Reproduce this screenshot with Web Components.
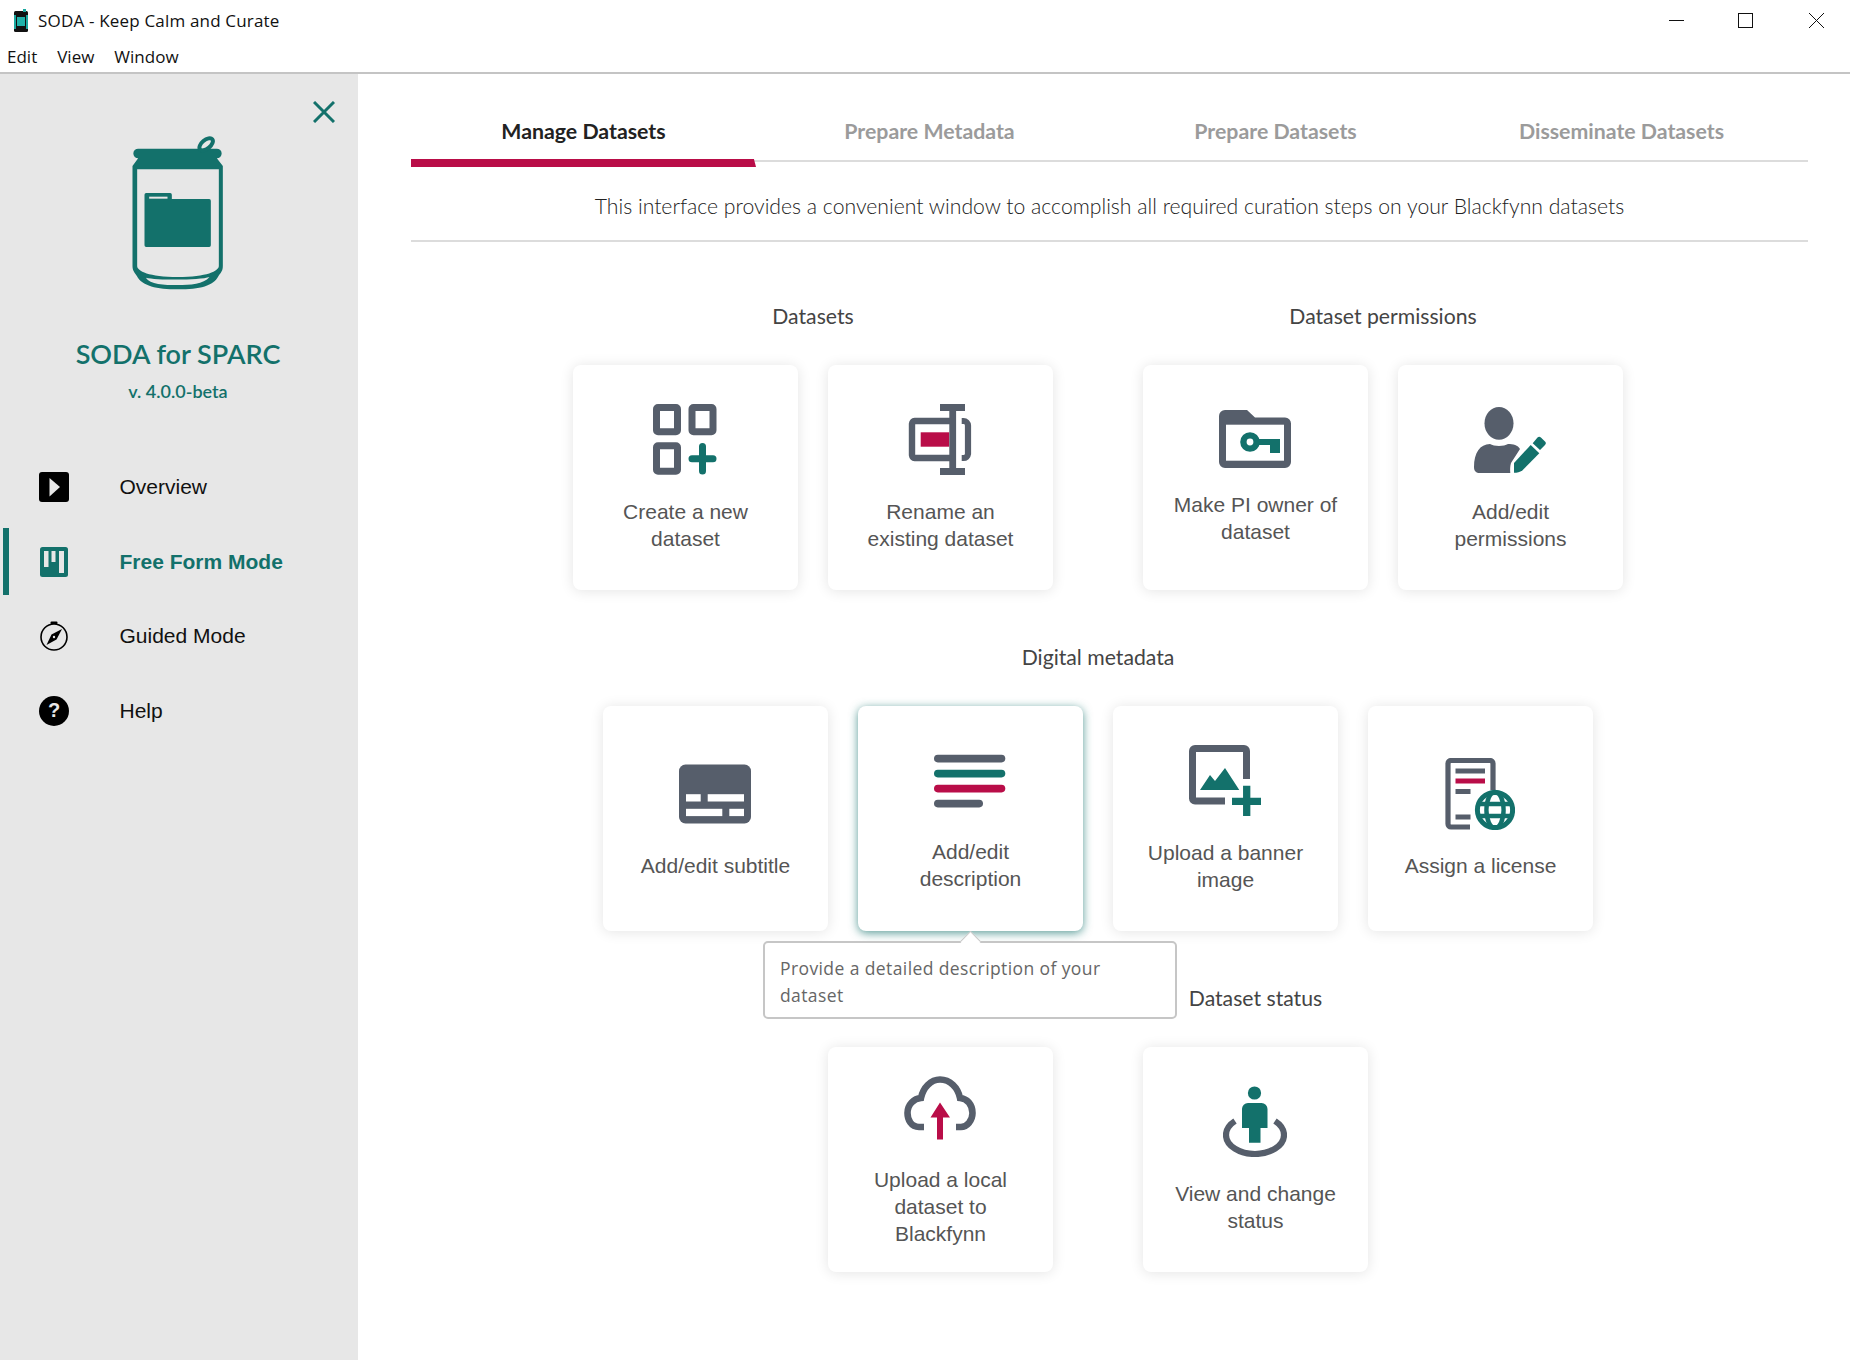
<!DOCTYPE html>
<html lang="en">
<head>
<meta charset="utf-8">
<title>SODA - Keep Calm and Curate</title>
<style>
	html, body { margin: 0; background: #fff; }
	body { font-family: "Liberation Sans", Arial, sans-serif; }
</style>
</head>
<body>
<soda-app>
	<soda-titlebar></soda-titlebar>
	<soda-sidebar>
		<soda-nav-item icon="overview">Overview</soda-nav-item>
		<soda-nav-item icon="freeform" selected>Free Form Mode</soda-nav-item>
		<soda-nav-item icon="guided">Guided Mode</soda-nav-item>
		<soda-nav-item icon="help">Help</soda-nav-item>
	</soda-sidebar>
	<soda-main>
		<soda-tabs>
			<soda-tab selected>Manage Datasets</soda-tab>
			<soda-tab>Prepare Metadata</soda-tab>
			<soda-tab>Prepare Datasets</soda-tab>
			<soda-tab>Disseminate Datasets</soda-tab>
		</soda-tabs>
		<soda-intro>This interface provides a convenient window to accomplish all required curation steps on your Blackfynn datasets</soda-intro>
		<soda-row first>
			<soda-group heading="Datasets">
				<soda-card icon="create">Create a new<br>dataset</soda-card>
				<soda-card icon="rename">Rename an<br>existing dataset</soda-card>
			</soda-group>
			<soda-group heading="Dataset permissions">
				<soda-card icon="owner">Make PI owner of<br>dataset</soda-card>
				<soda-card icon="permissions">Add/edit<br>permissions</soda-card>
			</soda-group>
		</soda-row>
		<soda-row>
			<soda-group heading="Digital metadata">
				<soda-card icon="subtitle">Add/edit subtitle</soda-card>
				<soda-card icon="description" active tip="Provide a detailed description of your dataset">Add/edit<br>description</soda-card>
				<soda-card icon="banner">Upload a banner<br>image</soda-card>
				<soda-card icon="license">Assign a license</soda-card>
			</soda-group>
		</soda-row>
		<soda-row>
			<soda-group>
				<soda-card icon="upload">Upload a local<br>dataset to<br>Blackfynn</soda-card>
			</soda-group>
			<soda-group heading="Dataset status">
				<soda-card icon="status">View and change<br>status</soda-card>
			</soda-group>
		</soda-row>
	</soda-main>
</soda-app>

<script>
const SLATE = '#565e6b';
const TEAL = '#13716b';
const RED = '#b90d48';

const NAV_ICONS = {
	overview: `<svg width="30" height="30" viewBox="0 0 30 30"><rect width="30" height="30" rx="3" fill="#000"/><path d="M10.5 6 L21 15 L10.5 24.5 Z" fill="#e7e7e7"/></svg>`,
	freeform: `<svg width="30" height="30" viewBox="0 0 30 30"><rect x="1" width="28" height="30" rx="2.5" fill="${TEAL}"/><rect x="5" y="4" width="4.5" height="16" fill="#e7e7e7"/><rect x="12.5" y="4" width="4" height="11" fill="#e7e7e7"/><rect x="20" y="4" width="5" height="22" fill="#e7e7e7"/></svg>`,
	guided: `<svg width="30" height="30" viewBox="0 0 30 30"><circle cx="15" cy="16" r="13" fill="none" stroke="#000" stroke-width="1.6"/><rect x="11.5" y="0.5" width="7" height="2.6" rx="1" fill="#000"/><path d="M23 8 L17.5 18.5 L7.5 24 L12.5 13.5 Z" fill="#000"/><circle cx="15" cy="16" r="1.2" fill="#e7e7e7"/></svg>`,
	help: `<span class="help">?</span>`
};

const CARD_ICONS = {
	create: `<svg width="64" height="71" viewBox="0 0 64 71">
		<g fill="#fff" stroke="${SLATE}" stroke-width="7"><rect x="3.5" y="3.5" width="21" height="24.2" rx="1.5"/><rect x="39" y="3.5" width="21" height="24.2" rx="1.5"/><rect x="3.5" y="41.8" width="21" height="25.4" rx="1.5"/></g>
		<path d="M39 54.8 H60 M49.5 42.5 V67" stroke="${TEAL}" stroke-width="7" stroke-linecap="round" fill="none"/></svg>`,
	rename: `<svg width="64" height="71" viewBox="0 0 64 71">
		<path d="M42 17 H7 a3.5 3.5 0 0 0 -3 3 V51 a3.5 3.5 0 0 0 3 3 H42" fill="none" stroke="${SLATE}" stroke-width="6.4"/>
		<rect x="12.7" y="28.3" width="28.5" height="14.4" fill="${RED}"/>
		<path d="M32 3.5 H57 M32 67.5 H57 M44.7 3 V68" fill="none" stroke="${SLATE}" stroke-width="6.8"/>
		<path d="M53.7 17 H55.5 a4.5 4.5 0 0 1 4.5 4.5 V50 a4.5 4.5 0 0 1 -4.5 4 H53.7" fill="none" stroke="${SLATE}" stroke-width="6.2"/></svg>`,
	owner: `<svg width="72" height="58" viewBox="0 0 72 58" style="margin-bottom:22.5px">
		<path d="M6 0 H28 L36 7.5 H66 a6 6 0 0 1 6 6 V52 a6 6 0 0 1 -6 6 H6 a6 6 0 0 1 -6 -6 V6 a6 6 0 0 1 6 -6 Z" fill="${SLATE}"/>
		<rect x="7" y="14.7" width="58" height="36" fill="#fff"/>
		<circle cx="31" cy="32" r="6.6" fill="none" stroke="${TEAL}" stroke-width="6.4"/>
		<path d="M38 29 H61 V43 H51 V35 H38 Z" fill="${TEAL}"/></svg>`,
	permissions: `<svg width="72" height="71" viewBox="0 -3 72 71">
		<ellipse cx="25" cy="16.3" rx="14.5" ry="16.4" fill="${SLATE}"/>
		<path d="M0 60 C0 46 6 37 16 37 C20 39.5 30 39.5 34 37 C39 37 44 38 46 42 L37 56 C36 59 36 63 36.3 66 H6 C2 66 0 64 0 60 Z" fill="${SLATE}"/>
		<path d="M40 56 L56.7 38 L65.3 46.3 L48.3 63.5 C46 65 43 65.8 40 65.8 Z" fill="${TEAL}"/>
		<path d="M58.7 36.3 L63.5 30.5 a2.4 2.4 0 0 1 3.4 0 L71 34.5 a2.4 2.4 0 0 1 0 3.4 L66 43 Z" fill="${TEAL}"/></svg>`,
	subtitle: `<svg width="72" height="70" viewBox="0 -5.5 72 70">
		<rect width="72" height="59" rx="6.5" fill="${SLATE}"/>
		<g fill="#fff"><rect x="7" y="29.7" width="14.7" height="7.3"/><rect x="28.7" y="29.7" width="36.3" height="7.3"/><rect x="7" y="44.3" width="36.3" height="7.3"/><rect x="50.3" y="44.3" width="14.7" height="7.3"/></g></svg>`,
	description: `<svg width="72" height="70" viewBox="0 -9.7 72 70">
		<rect width="71.3" height="7.7" rx="3.8" fill="${SLATE}"/>
		<rect y="15" width="71.3" height="7.7" rx="3.8" fill="${TEAL}"/>
		<rect y="30" width="71.3" height="7.7" rx="3.8" fill="${RED}"/>
		<rect y="45" width="49" height="7.7" rx="3.8" fill="${SLATE}"/></svg>`,
	banner: `<svg width="72" height="71" viewBox="0 0 72 71">
		<path d="M57.5 34 V6 a2.5 2.5 0 0 0 -2.5 -2.5 H6 a2.5 2.5 0 0 0 -2.5 2.5 V53.5 a2.5 2.5 0 0 0 2.5 2.5 H36" fill="none" stroke="${SLATE}" stroke-width="7"/>
		<path d="M11 45 L21 30 L26 36 L36 23 L50.3 45 Z" fill="${TEAL}"/>
		<path d="M43 56.3 H72 M57.7 40.7 V71" fill="none" stroke="${TEAL}" stroke-width="7.3"/></svg>`,
	license: `<svg width="70" height="72" viewBox="15 8 70 72" style="margin-bottom:21.5px">
		<path d="M40 77 H21 a3 3 0 0 1 -3 -3 V13.5 a3 3 0 0 1 3 -3 H60 a3 3 0 0 1 3 3 V40" fill="none" stroke="${SLATE}" stroke-width="5.2"/>
		<rect x="25.5" y="18.5" width="29.5" height="5" fill="${SLATE}"/>
		<rect x="25.5" y="28.5" width="29.5" height="5" fill="${RED}"/>
		<rect x="25.5" y="39" width="15" height="5" fill="${SLATE}"/>
		<rect x="25.5" y="64.5" width="15" height="5" fill="${SLATE}"/>
		<circle cx="65" cy="60" r="17.6" fill="#fff" stroke="${TEAL}" stroke-width="5"/>
		<ellipse cx="65" cy="60" rx="8.6" ry="18" fill="none" stroke="${TEAL}" stroke-width="4.4"/>
		<path d="M49 54 H81 M49 66 H81" stroke="${TEAL}" stroke-width="4.4"/></svg>`,
	upload: `<svg width="72" height="70" viewBox="14 12.5 72 70">
		<path d="M34 66.5 H29 C21 66.5 17.5 59 17.5 52.5 C17.5 44 24 38 31 37.5 C33 27 41 19 50 19 C60 19 68 27 70 37.5 C77 38 82.5 44 82.5 52.5 C82.5 60 77 66.5 71 66.5 H66" fill="none" stroke="${SLATE}" stroke-width="6.6"/>
		<path d="M50 42 L60 57 H53 V79 H47 V57 H40.5 Z" fill="${RED}"/></svg>`,
	status: `<svg width="64" height="71" viewBox="18 16 64 71">
		<circle cx="49.5" cy="23" r="6.6" fill="${TEAL}"/>
		<path d="M37 39 a6 6 0 0 1 6 -6 H56.5 a6 6 0 0 1 6 6 V58 H55.5 V72.7 H44 V58 H37 Z" fill="${TEAL}"/>
		<path d="M30 51 C23 55.5 21 61 21 65 C21 76 35 84 50 84 C65 84 79 76 79 65 C79 61 77 55.5 70 51" fill="none" stroke="${SLATE}" stroke-width="6.2"/></svg>`
};

class SodaApp extends HTMLElement {
	constructor() {
		super();
		this.attachShadow({ mode: 'open' });
		this.shadowRoot.innerHTML = `
			<style>
				:host { display: grid; grid-template-columns: 358px 1fr; grid-template-rows: 74px 1fr; width: 1850px; height: 1360px; overflow: hidden; }
				::slotted(soda-titlebar) { grid-column: 1 / 3; }
			</style>
			<slot></slot>
		`;
	}
}

class SodaTitlebar extends HTMLElement {
	constructor() {
		super();
		this.attachShadow({ mode: 'open' });
		this.shadowRoot.innerHTML = `
			<style>
				:host { display: block; box-sizing: border-box; height: 74px; border-bottom: 2px solid #c4c4c4; background: #fff; color: #111; font-family: "Open Sans", sans-serif; }
				.top { display: flex; align-items: center; height: 41px; }
				.app-icon { margin-left: 14px; }
				.name { margin-left: 10px; font-size: 17px; letter-spacing: 0.18px; flex: 1; white-space: pre; }
				.controls { display: flex; align-items: center; gap: 54px; padding-right: 26px; }
				.controls svg { display: block; }
				.controls svg:last-child { margin-left: 2px; }
				.menu { display: flex; gap: 20px; padding: 1px 0 0 7px; font-size: 17px; line-height: 30px; }
			</style>
			<div class="top">
				<svg class="app-icon" width="14" height="24" viewBox="0 0 14 24">
					<rect x="0" y="2" width="14" height="21" rx="1.5" fill="#111"/>
					<rect x="0" y="6" width="2" height="14" fill="#1aa79f"/><rect x="12" y="6" width="2" height="14" fill="#1aa79f"/>
					<rect x="3" y="8" width="8" height="9" fill="#20b2aa"/><rect x="9" y="0" width="3" height="3" fill="#1aa79f"/>
				</svg>
				<span class="name">SODA - Keep Calm and Curate</span>
				<div class="controls">
					<svg width="15" height="15" viewBox="0 0 15 15"><path d="M0 7.5 H15" stroke="#111" stroke-width="1"/></svg>
					<svg width="15" height="15" viewBox="0 0 15 15"><rect x="0.5" y="0.5" width="14" height="14" fill="none" stroke="#111" stroke-width="1"/></svg>
					<svg width="15" height="15" viewBox="0 0 15 15"><path d="M0 0 L15 15 M15 0 L0 15" stroke="#111" stroke-width="1"/></svg>
				</div>
			</div>
			<div class="menu"><span>Edit</span><span>View</span><span>Window</span></div>
		`;
	}
}

class SodaSidebar extends HTMLElement {
	constructor() {
		super();
		this.attachShadow({ mode: 'open' });
		this.shadowRoot.innerHTML = `
			<style>
				:host { display: flex; flex-direction: column; align-items: center; background: #e7e7e7; padding: 27px 2px 0 0; }
				.close { align-self: flex-end; margin-right: 21px; display: block; }
				.logo { display: block; margin-top: 13px; }
				h1 { margin: 48px 0 0; font: 600 27px/30px Lato, sans-serif; color: ${TEAL}; }
				.version { margin-top: 10px; font: 600 18px/24px Lato, sans-serif; color: ${TEAL}; }
				nav { align-self: stretch; margin-top: 47px; margin-right: -2px; }
			</style>
			<svg class="close" width="22" height="22" viewBox="0 0 22 22"><path d="M1 1 L21 21 M21 1 L1 21" stroke="${TEAL}" stroke-width="3" fill="none"/></svg>
			<svg class="logo" width="97" height="155" viewBox="390 405 290 465">
				<path fill="${TEAL}" fill-rule="evenodd" d="M414 443 H650 a14.5 14.5 0 0 1 0 29 L668 495 V795 C668 810 662 815 655 825 C640 855 600 865 533 865 C470 865 425 855 410 825 C404 815 397 810 397 795 V495 L414 472 a14.5 14.5 0 0 1 0 -29 Z M411 505 V795 C411 810 446 828 533 828 C620 828 656 810 656 795 V505 Z M437 830 C450 850 490 852 533 852 C570 852 610 850 628 828 C600 838 470 838 437 830 Z"/>
				<ellipse cx="618" cy="430" rx="24" ry="13" transform="rotate(-40 618 430)" fill="none" stroke="${TEAL}" stroke-width="12"/>
				<path fill="${TEAL}" d="M438 576 H510 a5 5 0 0 1 5 5 V594 H627 a5 5 0 0 1 5 5 V733 a5 5 0 0 1 -5 5 H438 a5 5 0 0 1 -5 -5 V581 a5 5 0 0 1 5 -5 Z"/>
				<rect x="447" y="587" width="55" height="6" fill="#e7e7e7"/>
			</svg>
			<h1>SODA for SPARC</h1>
			<div class="version">v. 4.0.0-beta</div>
			<nav><slot></slot></nav>
		`;
	}
}

class SodaNavItem extends HTMLElement {
	constructor() {
		super();
		this.attachShadow({ mode: 'open' });
	}

	connectedCallback() {
		const icon = NAV_ICONS[this.getAttribute('icon')] || '';
		this.shadowRoot.innerHTML = `
			<style>
				:host { display: flex; align-items: center; position: relative; height: 74.5px; padding-left: 39px; font-size: 21px; color: #111; }
				:host([selected]) { color: ${TEAL}; font-weight: 700; }
				:host([selected])::before { content: ''; position: absolute; left: 3px; top: 3.5px; width: 6px; height: 67px; background: ${TEAL}; }
				.icon { width: 80.5px; flex: none; display: flex; }
				svg { display: block; }
				.help { display: flex; align-items: center; justify-content: center; width: 30px; height: 30px; border-radius: 50%; background: #000; color: #e7e7e7; font-size: 20px; font-weight: 700; }
			</style>
			<span class="icon">${icon}</span><slot></slot>
		`;
	}
}

class SodaMain extends HTMLElement {
	constructor() {
		super();
		this.attachShadow({ mode: 'open' });
		this.shadowRoot.innerHTML = `
			<style>
				:host { display: block; background: #fff; padding: 0 42px 0 53px; }
			</style>
			<slot></slot>
		`;
	}
}

class SodaTabs extends HTMLElement {
	constructor() {
		super();
		this.attachShadow({ mode: 'open' });
		this.shadowRoot.innerHTML = `
			<style>
				:host { display: flex; box-sizing: border-box; height: 88px; border-bottom: 2px solid #dcdcdc; }
			</style>
			<slot></slot>
		`;
	}
}

class SodaTab extends HTMLElement {
	constructor() {
		super();
		this.attachShadow({ mode: 'open' });
		this.shadowRoot.innerHTML = `
			<style>
				:host { display: block; position: relative; flex: 0 0 346px; box-sizing: border-box; padding: 43px 1px 0 0; text-align: center; font: 700 21.3px/28px Lato, sans-serif; color: #9b9b9b; }
				:host([selected]) { color: #222; }
				:host([selected])::after { content: ''; position: absolute; left: 0; right: 1px; top: 85px; height: 8px; background: ${RED}; clip-path: polygon(0 0, 99.4% 0, 100% 100%, 0 100%); }
			</style>
			<slot></slot>
		`;
	}
}

class SodaIntro extends HTMLElement {
	constructor() {
		super();
		this.attachShadow({ mode: 'open' });
		this.shadowRoot.innerHTML = `
			<style>
				:host { display: block; box-sizing: border-box; height: 80px; padding-top: 30px; border-bottom: 2px solid #dcdcdc; text-align: center; font: 300 21.2px/28px Lato, sans-serif; color: #222; }
			</style>
			<slot></slot>
		`;
	}
}

class SodaRow extends HTMLElement {
	constructor() {
		super();
		this.attachShadow({ mode: 'open' });
		this.shadowRoot.innerHTML = `
			<style>
				:host { display: flex; justify-content: center; gap: 90px; margin-top: 44px; padding-right: 23px; }
				:host([first]) { margin-top: 51px; }
			</style>
			<slot></slot>
		`;
	}
}

class SodaGroup extends HTMLElement {
	constructor() {
		super();
		this.attachShadow({ mode: 'open' });
	}

	connectedCallback() {
		this.shadowRoot.innerHTML = `
			<style>
				:host { display: block; }
				.heading { height: 48px; margin-bottom: 24px; text-align: center; font: 400 21.2px/46px Lato, sans-serif; color: #444; }
				.cards { display: flex; gap: 30px; }
			</style>
			<div class="heading">${this.getAttribute('heading') || ''}</div>
			<div class="cards"><slot></slot></div>
		`;
	}
}

class SodaCard extends HTMLElement {
	constructor() {
		super();
		this.attachShadow({ mode: 'open' });
	}

	connectedCallback() {
		const icon = CARD_ICONS[this.getAttribute('icon')] || '';
		const tip = this.getAttribute('tip');
		this.shadowRoot.innerHTML = `
			<style>
				:host { display: flex; flex-direction: column; align-items: center; justify-content: center; position: relative; box-sizing: border-box; width: 225px; height: 225px; background: #fff; border-radius: 8px; box-shadow: 0 1px 14px rgba(0, 0, 0, 0.11); color: #555; font: 400 21px/27px "Liberation Sans", Arial, sans-serif; text-align: center; }
				:host([active]) { box-shadow: 0 2px 10px rgba(19, 113, 107, 0.7); z-index: 2; }
				svg { display: block; flex: none; margin: 0 2px 23px 0; }
				.tip { position: absolute; z-index: 5; left: -95px; top: 235px; box-sizing: border-box; width: 414px; height: 78px; padding: 11.5px 15px; background: #fff; border: 2px solid #c6c6c6; border-radius: 5px; text-align: left; font: 400 17.5px/27px "Open Sans", sans-serif; letter-spacing: 0.4px; color: #666; }
				.tip::before { content: ''; position: absolute; left: 198px; top: -9px; width: 14px; height: 14px; background: #fff; border: 1px solid #c6c6c6; border-right: 0; border-bottom: 0; transform: rotate(45deg); }
			</style>
			${icon}
			<div class="label"><slot></slot></div>
			${tip ? `<div class="tip">${tip}</div>` : ''}
		`;
	}
}

customElements.define('soda-app', SodaApp);
customElements.define('soda-titlebar', SodaTitlebar);
customElements.define('soda-sidebar', SodaSidebar);
customElements.define('soda-nav-item', SodaNavItem);
customElements.define('soda-main', SodaMain);
customElements.define('soda-tabs', SodaTabs);
customElements.define('soda-tab', SodaTab);
customElements.define('soda-intro', SodaIntro);
customElements.define('soda-row', SodaRow);
customElements.define('soda-group', SodaGroup);
customElements.define('soda-card', SodaCard);
</script>
</body>
</html>
